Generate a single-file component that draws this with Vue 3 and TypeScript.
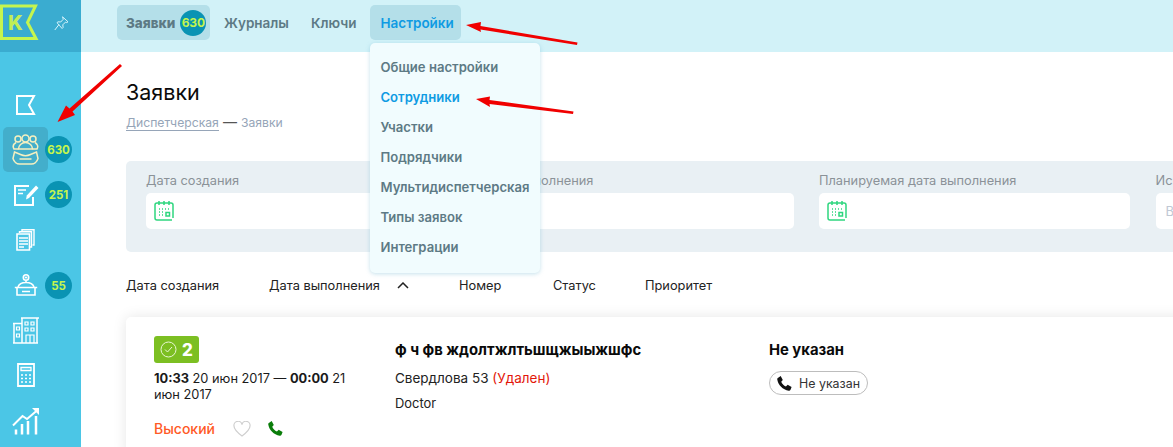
<script setup lang="ts">
const menu = ['Общие настройки', 'Сотрудники', 'Участки', 'Подрядчики', 'Мультидиспетчерская', 'Типы заявок', 'Интеграции']
const fields = ['Дата создания', 'Дата выполнения', 'Планируемая дата выполнения']
const sorts = ['Дата создания', 'Дата выполнения', 'Номер', 'Статус', 'Приоритет']
</script>

<template>
  <div class="app">
    <aside class="side">
      <div class="brand">
        <svg class="logo" width="40" height="52" viewBox="0 0 40 52" fill="none">
          <path d="M1.500 6H35.500L27.500 22.500 36 38.500H1.500z" stroke="#c5f54e" stroke-width="3" />
          <text x="8" y="30" class="logo-k">K</text>
        </svg>
        <svg class="pin" width="15" height="15" viewBox="0 0 15 15" fill="none" stroke="#d8f4fb" stroke-width="1">
          <path d="M8.500 .8l5.500 5-1.300 .8-1.200-.5-2.700 2.700.3 2.700-1 1-2.300-2.600-1.800-2-1-1.200 1-.9 2.700.2 2.600-2.800-.5-1.300z" />
          <path d="M5 8.500L.8 14" />
        </svg>
      </div>
      <nav class="side-nav">
        <div class="side-row first">
          <span class="side-icon">
            <svg width="22" height="22" viewBox="0 0 22 22" fill="none" stroke="#fff" stroke-width="2"><path d="M2 2h17l-5 9 5 9H2z" /></svg>
          </span>
        </div>
        <div class="side-row">
          <span class="side-icon active">
            <svg width="27" height="32" viewBox="0 0 27 32" fill="none" stroke="#f6f0c0" stroke-width="1.500">
              <circle cx="6" cy="5" r="3" /><circle cx="21" cy="5" r="3" /><circle cx="13.500" cy="4.500" r="3.500" />
              <path d="M6.500 15c0-3.500 3-6.500 7-6.500s7 3 7 6.500z" fill="#43aecb" />
              <path d="M6.500 15H2c-1.500-2.500-.5-5 2-6.500M20.500 15H25c1.500-2.500 .5-5-2-6.500" />
              <path d="M2.500 18l6 2.500c3 1.500 7 1.500 10 0l6-2.500 1.500 6.500c-1 3.500-4 5.500-6.500 5.500H7.500C5 30 2 28 1 24.500z" />
              <path d="M7.500 25h12" />
            </svg>
          </span>
          <span class="count">630</span>
        </div>
        <div class="side-row">
          <span class="side-icon">
            <svg width="26" height="23" viewBox="0 0 26 23" fill="none" stroke="#fff" stroke-width="2">
              <path d="M20 14v8H2V3h14" /><path d="M5 7h8M5 10.500h5" stroke-width="1.500" />
              <path d="M13 16.500l.8-4L23 2.500l2.500 2.500-9.500 10z" fill="#fff" stroke="none" />
            </svg>
          </span>
          <span class="count">251</span>
        </div>
        <div class="side-row">
          <span class="side-icon">
            <svg width="19" height="22" viewBox="0 0 19 22" fill="none" stroke="#fff" stroke-width="1.400">
              <path d="M6 2V.8h12V16h-1.500" /><path d="M3.500 4V2.800h12V18H14" />
              <path d="M1 5h12.500v16H1z" fill="#4bc6e6" stroke-width="1.600" />
              <path d="M3 9h9M3 12h9M3 15h9M3 18h5" stroke-width="1.400" />
            </svg>
          </span>
        </div>
        <div class="side-row">
          <span class="side-icon">
            <svg width="24" height="22" viewBox="0 0 24 22" fill="none" stroke="#fff" stroke-width="1.600">
              <circle cx="12" cy="3.500" r="2.700" /><path d="M10.800 3.500h2.400M12 2.300v2.400" stroke-width="1" />
              <path d="M12 6.500v2M4 13c1-3 4-4.500 8-4.500s7 1.500 8 4.500" />
              <path d="M.8 13.500h22.400M3 13.500V21h18v-7.500M8 17.500h8" />
            </svg>
          </span>
          <span class="count">55</span>
        </div>
        <div class="side-row">
          <span class="side-icon">
            <svg width="28" height="28" viewBox="0 0 28 28" fill="none" stroke="#fff" stroke-width="1.500">
              <path d="M1 7.500h9M2 7.500V27M10 27V2.500M25 2.500V27M1 27h25M9 2h18" />
              <path d="M4.500 11h3v3h-3zM4.500 18h3v3h-3zM13 6h3v3h-3zM19 6h3v3h-3zM13 12h3v3h-3zM19 12h3v3h-3zM14 27v-8h8v8M18 19v8" stroke-width="1.200" />
            </svg>
          </span>
        </div>
        <div class="side-row">
          <span class="side-icon">
            <svg width="18" height="24" viewBox="0 0 18 24" fill="none" stroke="#fff" stroke-width="1.800">
              <path d="M1 1h16v22H1z" /><path d="M4 4.500h10v3H4z" stroke-width="1.300" />
              <path d="M4 12h2M8 12h2M12 12h2M4 15.500h2M8 15.500h2M12 15.500h2M4 19h2M8 19h2M12 19h2" stroke-width="1.500" />
            </svg>
          </span>
        </div>
        <div class="side-row">
          <span class="side-icon">
            <svg width="28" height="28" viewBox="0 0 28 28" fill="none" stroke="#fff">
              <path d="M1 18.500L10.500 9l4.500 3L25 3.500" stroke-width="2" />
              <path d="M20 1h7v7z" fill="#fff" stroke="none" />
              <path d="M4 27.500v-5M10 27.500V17M16 27.500V14M24 27.500V9" stroke-width="2.500" />
            </svg>
          </span>
        </div>
      </nav>
    </aside>

    <main class="main">
      <header class="top">
        <a class="tab on"><b class="tab-strong">Заявки</b><span class="count small">630</span></a>
        <a class="tab">Журналы</a>
        <a class="tab keys">Ключи</a>
        <div class="tab-wrap">
          <a class="tab on blue">Настройки</a>
          <ul class="drop">
            <li v-for="m in menu" :key="m" :class="{ cur: m === 'Сотрудники' }">{{ m }}</li>
          </ul>
        </div>
      </header>

      <section class="content">
        <h1>Заявки</h1>
        <p class="crumbs"><span class="crumb-link">Диспетчерская</span><i>—</i>Заявки</p>

        <div class="filters">
          <label v-for="f in fields" :key="f" class="field">
            <span class="field-label">{{ f }}</span>
            <span class="input">
              <svg width="22" height="22" viewBox="0 0 22 22" fill="none" stroke="#2fd67f" stroke-width="1.500">
                <path d="M20 18v-13a2 2 0 0 0-2-2H4a2 2 0 0 0-2 2v13a2 2 0 0 0 2 2h15" />
                <path d="M6 1v4M11 1v4M16 1v4" />
                <path d="M6 9h1M9 9h1M12 9h1M15 9h1M6 12h1M9 12h1M6 15h1M9 15h1" />
                <rect x="13" y="12.500" width="3.500" height="3.500" />
              </svg>
            </span>
          </label>
          <label class="field">
            <span class="field-label">Исполнитель</span>
            <span class="input"><em class="ph">Выберите</em></span>
          </label>
        </div>

        <div class="sorts">
          <span v-for="s in sorts" :key="s" class="sort">
            {{ s }}
            <svg v-if="s === 'Дата выполнения'" class="chev" width="12" height="7" viewBox="0 0 12 7" fill="none" stroke="#222" stroke-width="1.500"><path d="M1 6l5-5 5 5" /></svg>
          </span>
        </div>

        <article class="card">
          <div class="col-a">
            <div class="badge">
              <svg width="17" height="17" viewBox="0 0 17 17" fill="none" stroke="#e9f7d4" stroke-width="1"><circle cx="8.500" cy="8.500" r="7.500" /><path d="M5 8.500l2.500 2.500 4.500-5" /></svg>
              <b>2</b>
            </div>
            <p class="dates"><b>10:33</b> 20 июн 2017 — <b>00:00</b> 21 июн 2017</p>
            <div class="meta">
              <span class="prio">Высокий</span>
              <svg width="18" height="16" viewBox="0 0 18 16" fill="none" stroke="#cfcfcf" stroke-width="1.200"><path d="M9 15C3 10.500 1 8 1 5a4 4 0 0 1 8-1.300A4 4 0 0 1 17 5c0 3-2 5.500-8 10z" /></svg>
              <svg class="phone" width="17" height="17" viewBox="0 0 24 24" fill="#0a7d0a"><path d="M6.600 1.500l3 5.500-2.200 2.500c1 3 3.600 5.600 6.600 6.600l2.500-2.200 5.500 3-1.500 4c-.5 1-1.500 1.500-2.500 1.300C9.500 21 3 14.500 1.800 6.500c-.2-1 .3-2 1.300-2.500z" /></svg>
            </div>
          </div>
          <div class="col-b">
            <h3>ф ч фв ждолтжлтьшщжыыжшфс</h3>
            <p>Свердлова 53 <span class="gone">(Удален)</span></p>
            <p class="doc">Doctor</p>
          </div>
          <div class="col-c">
            <h3>Не указан</h3>
            <span class="pill">
              <svg width="17" height="17" viewBox="0 0 24 24" fill="#111"><path d="M6.600 1.500l3 5.500-2.200 2.500c1 3 3.600 5.600 6.600 6.600l2.500-2.200 5.500 3-1.500 4c-.5 1-1.500 1.500-2.500 1.300C9.500 21 3 14.500 1.800 6.500c-.2-1 .3-2 1.300-2.500z" /></svg>
              Не указан
            </span>
          </div>
        </article>
      </section>
    </main>

    <svg class="arrows" width="1173" height="447" viewBox="0 0 1173 447" fill="#f00000">
      <path d="M57.500 122L66 105.500l3.500 3L120 64l2 2-49.500 45.500 2.500 3.500z" />
      <path d="M466 25l15-3-.5 4 97 16.500-.5 2.500-96.500-15.500.5 2.500z" />
      <path d="M476 99l14-2.500-.5 3.500 84 11.500-.5 2.500-83.500-10 .5 3z" />
    </svg>
  </div>
</template>

<style>
html, body { margin: 0; height: 100%; overflow: hidden; background: #fff; }
</style>

<style scoped>
.app {
  position: relative;
  display: flex;
  width: 1173px;
  height: 447px;
  overflow: hidden;
  font-family: Inter, "Noto Sans", "Liberation Sans", sans-serif;
  color: #111;
}
.side { flex: 0 0 81px; background: #4bc6e6; display: flex; flex-direction: column; }
.brand { height: 52px; background: #3aacd0; display: flex; align-items: flex-start; flex-shrink: 0; }
.logo-k { font: 800 20px Inter, sans-serif; fill: #c0ee55; }
.pin { margin: 16px 0 0 14px; }
.side-nav { display: flex; flex-direction: column; padding-top: 30px; }
.side-row { position: relative; height: 45.200px; margin-left: 3px; display: flex; align-items: flex-start; flex-shrink: 0; }
.side-row.first { height: 45px; }
.side-icon { width: 45px; height: 45px; border-radius: 5px; display: flex; align-items: center; justify-content: center; }
.side-icon.active { background: #43aecb; }
.count {
  position: absolute;
  left: 42px;
  top: 9px;
  width: 27px;
  height: 27px;
  border-radius: 50%;
  background: #0a93b3;
  color: #c5f54e;
  font-size: 11.500px;
  font-weight: 700;
  text-align: center;
  line-height: 28px;
}
.count.small { position: static; display: inline-block; width: 26px; height: 26px; line-height: 26px; margin-left: 5px; flex-shrink: 0; font-size: 12px; letter-spacing: -.2px; }

.main { flex: 1; min-width: 0; display: flex; flex-direction: column; }
.top {
  height: 52px;
  flex-shrink: 0;
  background: #d2f2f8;
  display: flex;
  gap: 4px;
  padding: 5px 0 0 36px;
  box-sizing: border-box;
  align-items: flex-start;
}
.tab {
  height: 35px;
  padding: 0 10px;
  display: flex;
  align-items: center;
  border-radius: 5px;
  font-size: 13.500px;
  font-weight: 600;
  color: #5d7a85;
  white-space: nowrap;
}
.tab.keys { margin-left: -2px; }
.tab.on { background: #b4dfe9; }
.tab:first-child { padding: 0 0 0 9px; width: 93px; box-sizing: border-box; }
.tab-strong { font-weight: 800; font-size: 13.500px; }
.tab.blue { color: #0f9be3; width: 91px; box-sizing: border-box; padding: 0 0 0 10px; }
.tab-wrap { position: relative; }
.drop {
  position: absolute;
  left: 0;
  top: 38px;
  width: 170px;
  height: 230px;
  margin: 0;
  padding: 9px 0 0 10px;
  box-sizing: border-box;
  list-style: none;
  background: #f1fcfe;
  border-radius: 5px;
  box-shadow: 0 1px 4px rgba(90, 170, 200, .35);
  z-index: 3;
}
.drop li { height: 30px; line-height: 30px; font-size: 13.100px; font-weight: 600; color: #5d7a85; white-space: nowrap; }
.drop li.cur { color: #0f9be3; }

.content { padding: 0 0 0 45px; }
h1 { margin: 26px 0 0; font-size: 21.500px; font-weight: 400; line-height: 28px; color: #0a0a0a; }
.crumbs { margin: 8px 0 0; height: 18px; font-size: 12.200px; line-height: 18px; color: #96a5b8; }
.crumb-link { border-bottom: 1px solid #96a5b8; }
.crumbs i { font-style: normal; font-size: 14px; line-height: 14px; color: #555; margin: 0 4px 0 4px; }
.filters {
  margin-top: 29px;
  width: 1100px;
  height: 91px;
  background: #e9f0f4;
  border-radius: 5px;
  box-sizing: border-box;
  padding: 11px 0 0 20px;
  display: flex;
  gap: 25.500px;
}
.field { flex: 0 0 311px; display: flex; flex-direction: column; }
.field-label { font-size: 12.800px; line-height: 18px; color: #8b9298; margin-bottom: 3px; white-space: nowrap; }
.input { height: 36px; border-radius: 5px; background: #fff; display: flex; align-items: center; padding-left: 7px; }
.ph { font-style: normal; font-size: 13px; color: #c0c8d4; padding-left: 3px; }

.sorts {
  display: grid;
  grid-template-columns: 143px 190px 94px 92px auto;
  margin-top: 25px;
  height: 18px;
  line-height: 18px;
  font-size: 12.800px;
  color: #222;
}
.sort { white-space: nowrap; }
.chev { margin-left: 14px; vertical-align: 1px; }
.card {
  margin-top: 22px;
  width: 1100px;
  height: 140px;
  padding: 19px 0 0 28px;
  box-sizing: border-box;
  border-radius: 5px;
  background: #fff;
  box-shadow: 0 0 14px rgba(0, 0, 0, .1);
  display: grid;
  grid-template-columns: 241px 374px auto;
  font-size: 12.500px;
  color: #222;
}
.badge {
  width: 45px;
  height: 27px;
  border-radius: 3px;
  background: #7cbf22;
  color: #fff;
  display: flex;
  align-items: center;
  justify-content: center;
  gap: 5px;
  font-size: 17px;
}
.badge b { font-weight: 800; }
.col-a { width: 215px; }
.dates { margin: 8px 0 0; line-height: 16px; font-size: 12.800px; color: #1a1a1a; }
.meta { display: flex; align-items: center; margin-top: 17px; }
.prio { color: #ff5a26; font-weight: 500; font-size: 14px; width: 79px; }
.phone { margin-left: 16px; }
h3 { margin: 1px 0 0; font-size: 14.800px; font-weight: 700; line-height: 26px; color: #0a0a0a; white-space: nowrap; }
.col-b p { margin: 6px 0 0; font-size: 13.500px; line-height: 18px; color: #222; }
.col-b p.doc { margin-top: 8px; font-size: 12.900px; }
.gone { color: #e3170a; }
.pill {
  display: inline-flex;
  align-items: center;
  gap: 6px;
  margin-top: 8px;
  height: 24px;
  width: 99px;
  box-sizing: border-box;
  padding-left: 6px;
  border: 1px solid #bdbdbd;
  border-radius: 12px;
  font-size: 12.400px;
  color: #333;
}
.arrows { position: absolute; left: 0; top: 0; pointer-events: none; z-index: 5; }
</style>
